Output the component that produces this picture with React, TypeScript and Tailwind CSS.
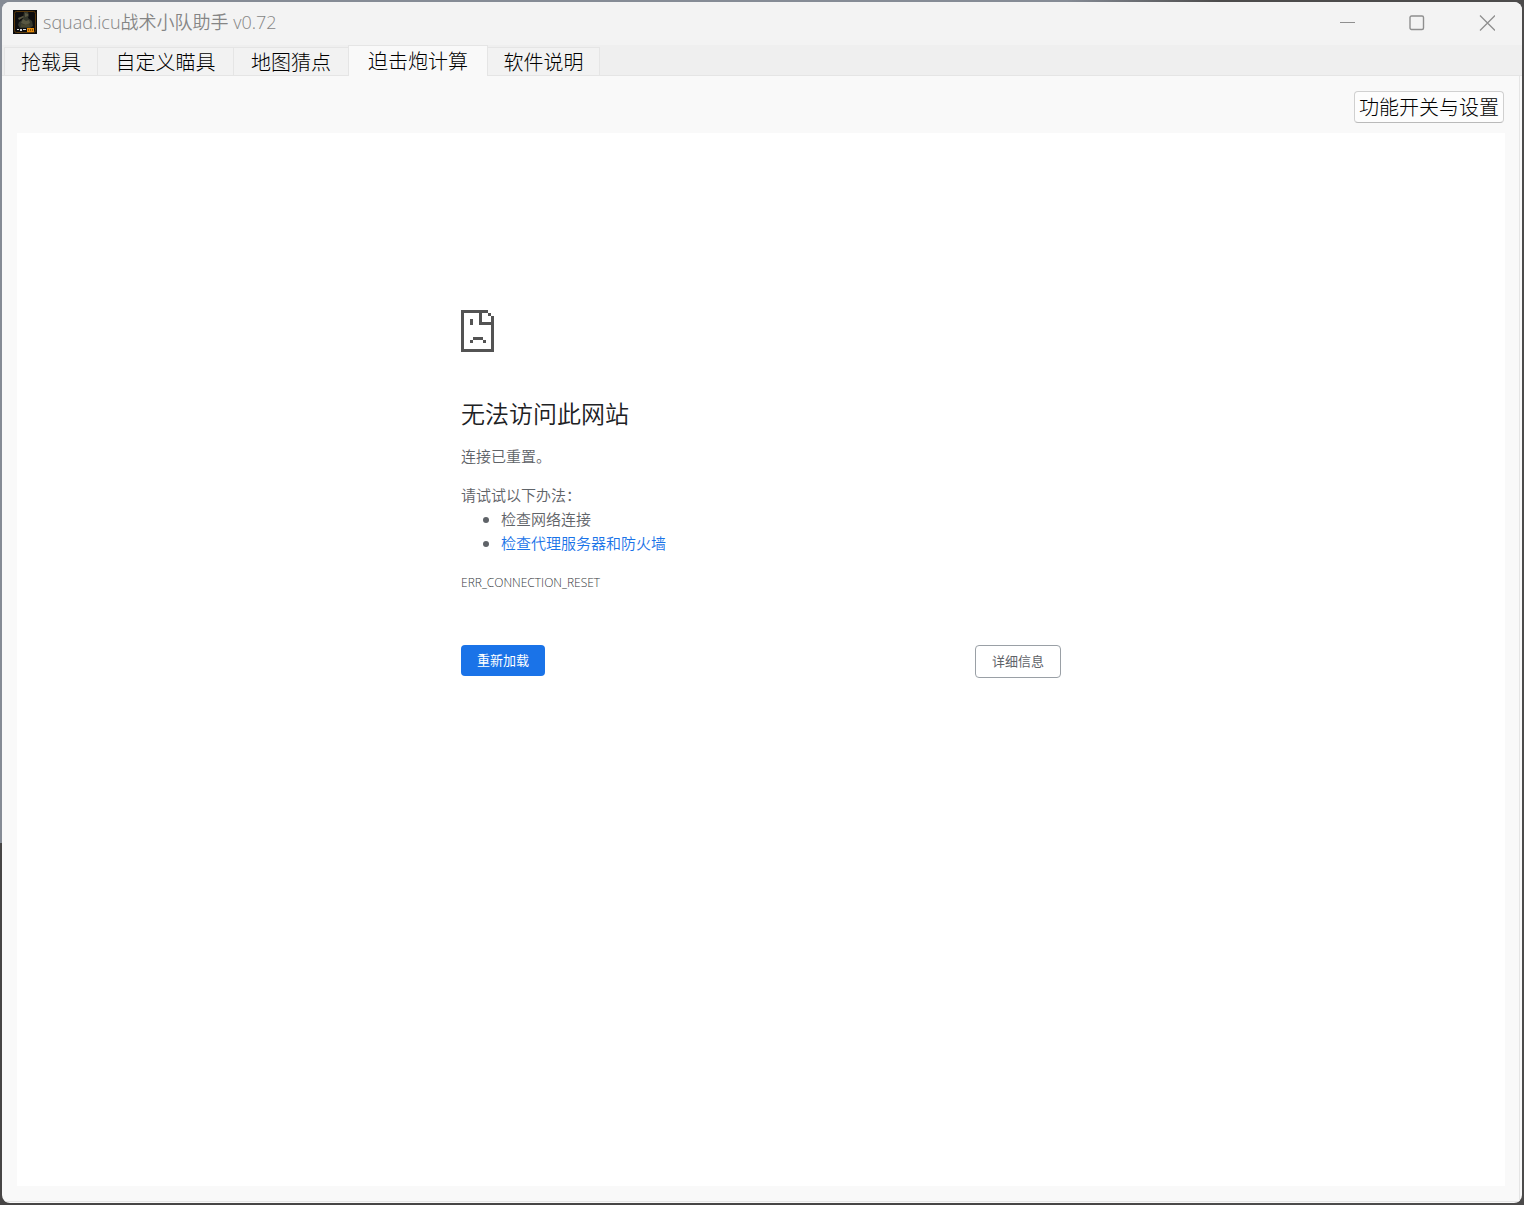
import React from 'react';

const tabs = [
  { label: '抢载具', width: 'w-[94px]' },
  { label: '自定义瞄具', width: 'w-[136px]' },
  { label: '地图猜点', width: 'w-[114px]' },
  { label: '迫击炮计算', width: 'w-[140px]' },
  { label: '软件说明', width: 'w-[112px]' },
];

const activeTab = '迫击炮计算';

function AppIcon() {
  return (
    <svg width="24" height="24" viewBox="0 0 24 24" aria-hidden="true">
      <rect width="24" height="24" fill="#0b0b0c" />
      <rect x="1.5" y="1.5" width="21" height="21" rx="2" fill="#0d0d0e" stroke="#5a390b" />
      <path d="M11 2h4l1 3-1 3 4 3 1 5-3 2H7l-2-3 1-3 2-1 2-3z" fill="#34372c" />
      <path d="M12 3l3 1v2l-3 1zM10 9l3 2 3-1 1 3-4 2-5-2zM5 8l5-2 1 1-5 3z" fill="#5a5842" />
      <path d="M8 14l4 1 4-1 1 3H8z" fill="#47452f" />
      <path d="M4 19h2v1H4zM7 19h2v2H7zM10 19h3v1h-3z" fill="#d8d8d8" />
      <rect x="14" y="18" width="7" height="4" fill="#e58a0a" />
      <path d="M15 19h1v2h-1zM17 19h1v2h-1zM19 19h1v2h-1z" fill="#8a5208" />
    </svg>
  );
}

function SadPageIcon() {
  return (
    <svg width="33" height="42" viewBox="0 0 33 42" shapeRendering="crispEdges" aria-hidden="true">
      <path
        fill="#535353"
        fillRule="evenodd"
        d="M0 0h27v3h-6v9h9V6h3v36H0zM3 3v36h27V15H18V3zM27 3h3v3h-3zM9 9h3v6H9zM12 27h10v3H12zM9 30h3v3H9zM22 30h3v3h-3z"
      />
    </svg>
  );
}

function TitleBar() {
  return (
    <header className="flex h-[43px] items-center justify-between bg-[#f3f3f3] pl-[11px]">
      <div className="flex items-center gap-[6px] pb-[3px]">
        <AppIcon />
        <h1 className="text-[18px] leading-6 font-[350] text-[#858585] font-['Open_Sans','Noto_Sans_CJK_SC',sans-serif]">
          squad.icu战术小队助手 v0.72
        </h1>
      </div>
      <div className="flex pb-[2px]">
        <button type="button" aria-label="最小化" className="flex h-8 w-[70px] items-center justify-center">
          <svg width="16" height="16" fill="none" stroke="#8f8f8f">
            <path d="M1 7.5h15" />
          </svg>
        </button>
        <button type="button" aria-label="最大化" className="flex h-8 w-[70px] items-center justify-center">
          <svg width="16" height="16" fill="none" stroke="#8f8f8f">
            <rect x="1" y="1" width="13.5" height="13.5" rx="1.5" strokeWidth="1.4" />
          </svg>
        </button>
        <button type="button" aria-label="关闭" className="flex h-8 w-[70px] items-center justify-center">
          <svg width="16" height="16" fill="none" stroke="#8f8f8f">
            <path d="M1 .5l15 15M16 .5l-15 15" strokeWidth="1.3" />
          </svg>
        </button>
      </div>
    </header>
  );
}

function TabBar() {
  return (
    <nav role="tablist" className="flex h-[31px] items-end border-b border-[#e5e5e5] bg-[#efefef] pl-[2px]">
      {tabs.map(t => (
        <button
          key={t.label}
          type="button"
          role="tab"
          aria-selected={t.label === activeTab}
          className={
            t.label === activeTab
              ? `${t.width} -mb-px h-[31px] shrink-0 border-x border-t border-[#e5e5e5] bg-[#f9f9f9] text-[20px] leading-[30px] font-light`
              : `${t.width} h-[28px] shrink-0 border-t border-r border-[#e5e5e5] bg-[#f2f2f2] text-[20px] leading-[28px] font-light first:border-l nth-3:border-r-0`
          }
        >
          {t.label}
        </button>
      ))}
    </nav>
  );
}

function ErrorPage() {
  return (
    <main className="flex-1 bg-white px-6 pt-[177px]">
      <div className="mx-auto max-w-[600px] text-[15px] leading-6 font-[350] text-[#5f6368]">
        <SadPageIcon />
        <h2 className="mt-[46px] text-[24px] leading-[30px] text-[#202124]">无法访问此网站</h2>
        <p className="mt-4">连接已重置。</p>
        <p className="mt-[15px]">请试试以下办法：</p>
        <ul className="list-disc pl-10">
          <li>检查网络连接</li>
          <li>
            <a href="#proxy" className="text-[#1a73e8]">检查代理服务器和防火墙</a>
          </li>
        </ul>
        <p className="mt-4 text-[12px] text-[#36393d] font-['Open_Sans',sans-serif]">ERR_CONNECTION_RESET</p>
        <div className="mt-[50px] flex items-start justify-between">
          <button type="button" className="h-[31px] rounded-[4px] bg-[#1a73e8] px-4 pb-[2px] text-[13px] font-normal text-white">
            重新加载
          </button>
          <button type="button" className="h-[33px] rounded-[4px] border border-[#9aa0a6] px-4 pb-[2px] text-[13px] font-normal">
            详细信息
          </button>
        </div>
      </div>
    </main>
  );
}

export default function App() {
  return (
    <div className="flex min-h-screen bg-[linear-gradient(to_right,transparent_70%,#4c4b4b_80%),linear-gradient(to_bottom,#858b95_70%,#474545_70%)] p-[2px] font-['Noto_Sans_CJK_SC',sans-serif] text-black">
      <div className="flex flex-1 flex-col overflow-hidden rounded-lg bg-[#f9f9f9]">
        <TitleBar />
        <TabBar />
        <div className="mr-[2px] mb-[1px] flex flex-1 flex-col border-r border-b border-[#e5e5e5] pr-[14px] pb-[15px] pl-[15px]">
          <div className="flex justify-end pt-[15px] pr-px pb-[10px]">
            <button
              type="button"
              className="h-8 rounded-[4px] border border-[#d0d0d0] border-b-[#bababa] bg-[#fdfdfd] px-1 text-[20px] leading-[30px] font-light"
            >
              功能开关与设置
            </button>
          </div>
          <ErrorPage />
        </div>
      </div>
    </div>
  );
}
